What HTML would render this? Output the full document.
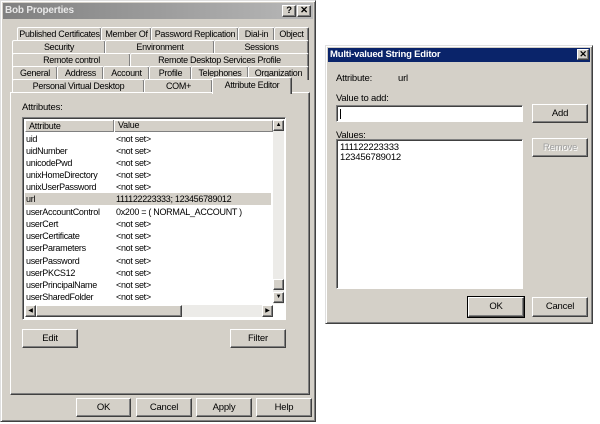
<!DOCTYPE html>
<html><head><meta charset="utf-8"><style>
*{box-sizing:border-box;margin:0;padding:0}
body{width:600px;height:424px;background:#fff;font-family:"Liberation Sans",sans-serif;font-size:9.5px;letter-spacing:-0.2px;color:#000;position:relative;overflow:hidden;white-space:nowrap}
.a{position:absolute}
.win{background:#d4d0c8;border:1px solid;border-color:#dfdfdf #404040 #404040 #dfdfdf;box-shadow:inset 1px 1px #fff,inset -1px -1px #808080}
.btn{position:absolute;background:#d4d0c8;border:1px solid;border-color:#fff #404040 #404040 #fff;box-shadow:inset -1px -1px #808080;text-align:center;font-size:9.5px}
.tab{position:absolute;background:#d4d0c8;border:1px solid;border-bottom:none;border-color:#fff #404040 #404040 #fff;box-shadow:inset -1px 0 #808080;text-align:center;font-size:9px;letter-spacing:-0.3px;line-height:12px;border-radius:2px 2px 0 0;overflow:hidden}
.sunk{position:absolute;background:#fff;border:1px solid;border-color:#808080 #fff #fff #808080;box-shadow:inset 1px 1px #404040}
.row{position:absolute;left:3px;width:246px;height:12px;line-height:12px;font-size:9px;letter-spacing:-0.3px}
.row span{position:absolute;left:90px}
</style></head><body>

<div class="a win" style="left:0;top:0;width:316px;height:422px">
 <div class="a" style="left:2px;top:2px;width:310px;height:16px;background:linear-gradient(90deg,#808080,#b8b8b8);color:#e8e8e8;font-weight:bold;font-size:10px;line-height:16px;padding-left:2px">Bob Properties</div>
 <div class="btn" style="left:281px;top:4px;width:14px;height:12px;font-weight:bold;line-height:10px">?</div>
 <div class="btn" style="left:296px;top:4px;width:14px;height:12px;font-weight:bold;line-height:10px">✕</div>

 <div class="tab" style="left:16px;top:26px;width:85px;height:14px">Published Certificates</div>
 <div class="tab" style="left:100px;top:26px;width:51px;height:14px">Member Of</div>
 <div class="tab" style="left:150px;top:26px;width:88px;height:14px">Password Replication</div>
 <div class="tab" style="left:237px;top:26px;width:37px;height:14px">Dial-in</div>
 <div class="tab" style="left:273px;top:26px;width:35px;height:14px">Object</div>

 <div class="tab" style="left:11px;top:39px;width:94px;height:14px">Security</div>
 <div class="tab" style="left:104px;top:39px;width:110px;height:14px">Environment</div>
 <div class="tab" style="left:213px;top:39px;width:95px;height:14px">Sessions</div>

 <div class="tab" style="left:11px;top:52px;width:119px;height:14px">Remote control</div>
 <div class="tab" style="left:129px;top:52px;width:179px;height:14px">Remote Desktop Services Profile</div>

 <div class="tab" style="left:11px;top:65px;width:46px;height:14px">General</div>
 <div class="tab" style="left:56px;top:65px;width:47px;height:14px">Address</div>
 <div class="tab" style="left:102px;top:65px;width:47px;height:14px">Account</div>
 <div class="tab" style="left:148px;top:65px;width:43px;height:14px">Profile</div>
 <div class="tab" style="left:190px;top:65px;width:58px;height:14px">Telephones</div>
 <div class="tab" style="left:247px;top:65px;width:61px;height:14px">Organization</div>

 <div class="tab" style="left:11px;top:78px;width:133px;height:14px">Personal Virtual Desktop</div>
 <div class="tab" style="left:143px;top:78px;width:69px;height:14px">COM+</div>

 <div class="a" style="left:9px;top:91px;width:300px;height:303px;border:1px solid;border-color:#fff #404040 #404040 #fff;box-shadow:inset -1px -1px #808080"></div>
 <div class="tab" style="left:211px;top:76px;width:80px;height:17px;border-bottom:none;line-height:14px;z-index:2">Attribute Editor</div>

 <div class="a" style="left:21px;top:101px">Attributes:</div>
 <div class="sunk" style="left:21px;top:116px;width:264px;height:203px">
  <div class="a" style="left:2px;top:2px;width:248px;height:12px;background:#d4d0c8;border:1px solid;border-color:#fff #808080 #808080 #fff;font-size:9px;line-height:10px;padding-left:3px">Attribute</div>
  <div class="a" style="left:90px;top:2px;width:160px;height:12px;border-left:1px solid #808080;font-size:9px;line-height:10px;padding-left:4px;box-shadow:inset 1px 0 #fff">Value</div>
  <div class="row" style="top:15px">uid<span>&lt;not set&gt;</span></div>
  <div class="row" style="top:27px">uidNumber<span>&lt;not set&gt;</span></div>
  <div class="row" style="top:39px">unicodePwd<span>&lt;not set&gt;</span></div>
  <div class="row" style="top:51px">unixHomeDirectory<span>&lt;not set&gt;</span></div>
  <div class="row" style="top:63px">unixUserPassword<span>&lt;not set&gt;</span></div>
  <div class="row" style="top:75px;background:#d4d0c8;left:2px;padding-left:1px">url<span style="left:91px">111122223333; 123456789012</span></div>
  <div class="row" style="top:88px">userAccountControl<span>0x200 = ( NORMAL_ACCOUNT )</span></div>
  <div class="row" style="top:100px">userCert<span>&lt;not set&gt;</span></div>
  <div class="row" style="top:112px">userCertificate<span>&lt;not set&gt;</span></div>
  <div class="row" style="top:124px">userParameters<span>&lt;not set&gt;</span></div>
  <div class="row" style="top:137px">userPassword<span>&lt;not set&gt;</span></div>
  <div class="row" style="top:149px">userPKCS12<span>&lt;not set&gt;</span></div>
  <div class="row" style="top:161px">userPrincipalName<span>&lt;not set&gt;</span></div>
  <div class="row" style="top:173px">userSharedFolder<span>&lt;not set&gt;</span></div>
  <div class="a" style="left:250px;top:2px;width:11px;height:184px;background:#ecebe8"></div>
  <div class="btn" style="left:250px;top:2px;width:11px;height:11px;font-size:6px;line-height:9px">▲</div>
  <div class="btn" style="left:250px;top:161px;width:11px;height:11px"></div>
  <div class="btn" style="left:250px;top:174px;width:11px;height:11px;font-size:6px;line-height:9px">▼</div>
  <div class="a" style="left:2px;top:187px;width:248px;height:12px;background:#ecebe8"></div>
  <div class="btn" style="left:2px;top:187px;width:11px;height:12px;font-size:6px;line-height:10px">◀</div>
  <div class="btn" style="left:13px;top:187px;width:146px;height:12px"></div>
  <div class="btn" style="left:239px;top:187px;width:11px;height:12px;font-size:6px;line-height:10px">▶</div>
 </div>
 <div class="btn" style="left:21px;top:328px;width:56px;height:19px;line-height:17px">Edit</div>
 <div class="btn" style="left:229px;top:328px;width:56px;height:19px;line-height:17px">Filter</div>

 <div class="btn" style="left:75px;top:397px;width:55px;height:19px;line-height:17px">OK</div>
 <div class="btn" style="left:135px;top:397px;width:56px;height:19px;line-height:17px">Cancel</div>
 <div class="btn" style="left:195px;top:397px;width:56px;height:19px;line-height:17px">Apply</div>
 <div class="btn" style="left:255px;top:397px;width:56px;height:19px;line-height:17px">Help</div>
</div>

<div class="a win" style="left:325px;top:45px;width:268px;height:279px">
 <div class="a" style="left:2px;top:2px;width:262px;height:14px;background:#0a246a;color:#fff;font-weight:bold;font-size:9.5px;line-height:14px;padding-left:2px">Multi-valued String Editor</div>
 <div class="btn" style="left:251px;top:3px;width:12px;height:11px;font-weight:bold;font-size:9px;line-height:9px">✕</div>
 <div class="a" style="left:10px;top:27px">Attribute:</div>
 <div class="a" style="left:72px;top:27px">url</div>
 <div class="a" style="left:10px;top:47px">Value to add:</div>
 <div class="sunk" style="left:10px;top:59px;width:187px;height:17px"><div class="a" style="left:3px;top:3px;width:1px;height:10px;background:#000"></div></div>
 <div class="btn" style="left:206px;top:58px;width:56px;height:19px;line-height:17px">Add</div>
 <div class="a" style="left:10px;top:84px">Values:</div>
 <div class="sunk" style="left:10px;top:93px;width:187px;height:150px;padding:3px 3px;line-height:10px;font-size:9.5px">111122223333<br>123456789012</div>
 <div class="btn" style="left:206px;top:92px;width:56px;height:19px;line-height:17px;color:#a0a0a0;text-shadow:1px 1px #fff">Remove</div>
 <div class="btn" style="left:142px;top:251px;width:56px;height:20px;line-height:18px;outline:1px solid #000">OK</div>
 <div class="btn" style="left:206px;top:251px;width:56px;height:20px;line-height:18px">Cancel</div>
</div>
</body></html>
